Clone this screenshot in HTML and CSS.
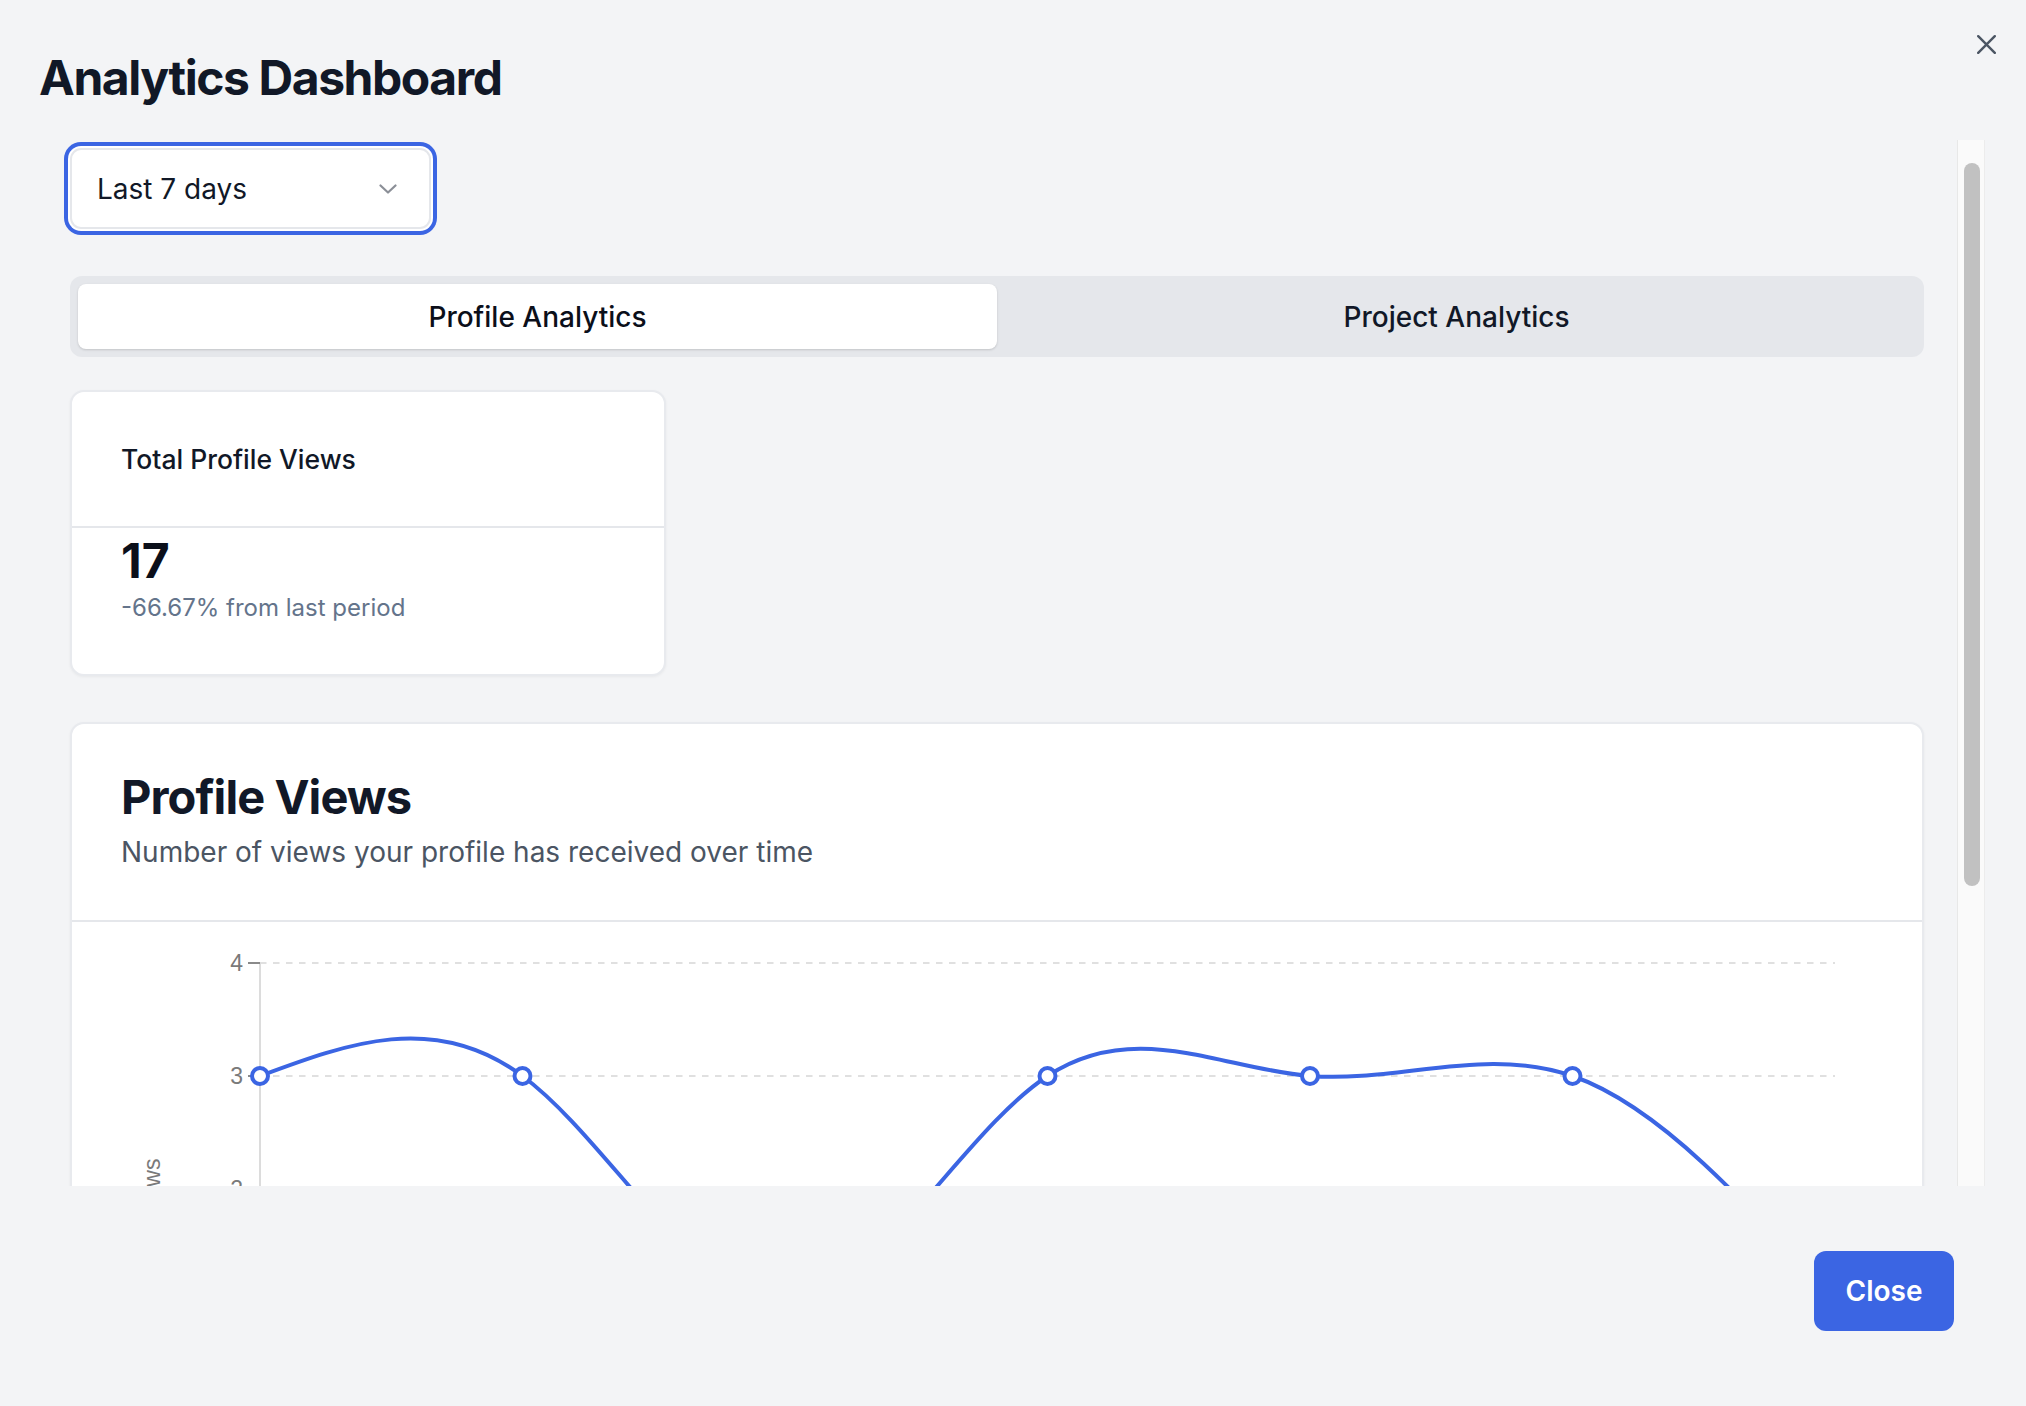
FILE: index.html
```html
<!DOCTYPE html>
<html lang="en">
<head>
    <meta charset="UTF-8">
    <meta name="viewport" content="width=device-width, initial-scale=1.0">
    <title>Analytics Dashboard</title>
    <link rel="stylesheet" href="styles.css">
</head>
<body>
    <div class="dialog">
        <!-- Header -->
        <header class="dialog-header">
            <h1>Analytics Dashboard</h1>
        </header>
        <button class="icon-close" aria-label="Close">
            <svg width="19" height="19" viewBox="0 0 19 19">
                <path d="M1.2 1.2 17.8 17.8M17.8 1.2 1.2 17.8" />
            </svg>
        </button>

        <!-- Scrollable body -->
        <div class="scroll-area">
            <div class="dialog-body">
                <div class="range-select">
                    <span>Last 7 days</span>
                    <svg width="18" height="10" viewBox="0 0 18 10">
                        <path d="M1.5 1.5 9 8.5l7.5-7" />
                    </svg>
                </div>

                <div class="tabs">
                    <button class="tab active">Profile Analytics</button>
                    <button class="tab">Project Analytics</button>
                </div>

                <div class="stats-grid">
                    <div class="card">
                        <div class="card-header">
                            <h3 class="stat-title">Total Profile Views</h3>
                        </div>
                        <div class="card-content">
                            <div class="stat-value">17</div>
                            <p class="stat-change">-66.67% from last period</p>
                        </div>
                    </div>
                </div>

                <div class="card chart-card">
                    <div class="card-header">
                        <h2 class="chart-title">Profile Views</h2>
                        <p class="chart-desc">Number of views your profile has received over time</p>
                    </div>
                    <div class="card-content chart-content">
                        <svg class="chart" width="1848" height="580" viewBox="0 0 1848 580">
                            <!-- grid -->
                            <g class="grid">
                                <line x1="188" y1="41" x2="1763" y2="41" />
                                <line x1="188" y1="154" x2="1763" y2="154" />
                                <line x1="188" y1="267" x2="1763" y2="267" />
                                <line x1="188" y1="380" x2="1763" y2="380" />
                            </g>
                            <!-- y axis -->
                            <g class="axis">
                                <line class="axis-line" x1="188" y1="41" x2="188" y2="493" />
                                <line class="axis-line" x1="188" y1="493" x2="1763" y2="493" />
                                <line class="tick" x1="176" y1="41" x2="188" y2="41" />
                                <line class="tick" x1="176" y1="154" x2="188" y2="154" />
                                <line class="tick" x1="176" y1="267" x2="188" y2="267" />
                                <line class="tick" x1="176" y1="380" x2="188" y2="380" />
                                <line class="tick" x1="176" y1="493" x2="188" y2="493" />
                                <text x="171" y="49" text-anchor="end">4</text>
                                <text x="171" y="162" text-anchor="end">3</text>
                                <text x="171" y="275" text-anchor="end">2</text>
                                <text x="171" y="388" text-anchor="end">1</text>
                                <text x="171" y="501" text-anchor="end">0</text>
                                <text x="88" y="267" text-anchor="middle" transform="rotate(-90 88 267)">Views</text>
                            </g>
                            <!-- x axis -->
                            <g class="axis">
                                <text x="188" y="530" text-anchor="middle">Jun 10</text>
                                <text x="450.5" y="530" text-anchor="middle">Jun 11</text>
                                <text x="713" y="530" text-anchor="middle">Jun 12</text>
                                <text x="975.5" y="530" text-anchor="middle">Jun 13</text>
                                <text x="1238" y="530" text-anchor="middle">Jun 14</text>
                                <text x="1500.5" y="530" text-anchor="middle">Jun 15</text>
                                <text x="1763" y="530" text-anchor="middle">Jun 16</text>
                            </g>
                            <!-- line -->
                            <path class="line" d="M188,154 C275.5,121.45 363,88.9 450.5,154 C538,219.1 625.5,381.84 713,380 C800.5,378.17 888,211.76 975.5,154 C1063,96.24 1150.5,147.14 1238,154 C1325.5,160.86 1413,123.67 1500.5,154 C1588,184.33 1675.5,282.16 1763,380" />
                            <g class="dots">
                                <circle cx="188" cy="154" r="8" />
                                <circle cx="450.5" cy="154" r="8" />
                                <circle cx="713" cy="380" r="8" />
                                <circle cx="975.5" cy="154" r="8" />
                                <circle cx="1238" cy="154" r="8" />
                                <circle cx="1500.5" cy="154" r="8" />
                                <circle cx="1763" cy="380" r="8" />
                            </g>
                        </svg>
                    </div>
                </div>
            </div>
            <div class="scrollbar">
                <div class="scrollbar-thumb"></div>
            </div>
        </div>

        <!-- Footer -->
        <footer class="dialog-footer">
            <button class="btn-primary">Close</button>
        </footer>
    </div>
</body>
</html>
```

FILE: styles.css
```css
:root {
    --bg: #f3f4f6;
    --text: #111827;
    --muted: #4b5563;
    --slate: #64748b;
    --border: #e5e7eb;
    --primary: #3b65e3;
    --font: "Inter", "Noto Sans", sans-serif;
}

* {
    margin: 0;
    padding: 0;
    box-sizing: border-box;
}

body {
    background-color: var(--bg);
    color: var(--text);
    font-family: var(--font);
    height: 100vh;
    overflow: hidden;
}

button {
    font-family: inherit;
    border: none;
    background: none;
    cursor: pointer;
}

.dialog {
    position: relative;
    height: 100vh;
    display: flex;
    flex-direction: column;
    padding: 0 41px 0 39px;
}

.dialog-header {
    padding-top: 48px;
    margin-bottom: 32px;
}

.dialog-header h1 {
    font-size: 48px;
    line-height: 60px;
    font-weight: 700;
    letter-spacing: -0.03em;
    color: var(--text);
}

.icon-close {
    position: absolute;
    top: 35px;
    right: 30px;
    width: 19px;
    height: 19px;
    display: flex;
}

.icon-close path {
    fill: none;
    stroke: #4b5563;
    stroke-width: 2.4;
    stroke-linecap: round;
}

/* Scroll area */
.scroll-area {
    height: 1046px;
    display: flex;
}

.dialog-body {
    flex: 1;
    min-width: 0;
    overflow: hidden;
    padding: 8px 33px 30px 31px;
}

.scrollbar {
    width: 28px;
    flex-shrink: 0;
    background: #fafafa;
    border-left: 1px solid #e8e8e8;
    border-right: 1px solid #ececec;
    padding: 23px 4px 0 6px;
}

.scrollbar-thumb {
    height: 723px;
    background: #c1c1c1;
    border-radius: 8px;
}

/* Select */
.range-select {
    width: 361px;
    height: 81px;
    display: flex;
    align-items: center;
    justify-content: space-between;
    padding: 0 32px 0 25px;
    background: #fff;
    border: 2px solid var(--border);
    border-radius: 11px;
    box-shadow: 0 0 0 2px #fff, 0 0 0 6px var(--primary);
    font-size: 28px;
    color: var(--text);
}

.range-select path {
    fill: none;
    stroke: #8b8f97;
    stroke-width: 2.2;
    stroke-linecap: round;
    stroke-linejoin: round;
}

/* Tabs */
.tabs {
    margin-top: 47px;
    display: grid;
    grid-template-columns: 1fr 1fr;
    padding: 8px;
    height: 81px;
    background: #e5e7eb;
    border-radius: 12px;
}

.tab {
    font-size: 28px;
    font-weight: 500;
    color: var(--text);
    border-radius: 8px;
}

.tab.active {
    background: #fff;
    color: #0b0f1a;
    box-shadow: 0 1px 3px rgba(0, 0, 0, 0.1), 0 1px 2px rgba(0, 0, 0, 0.06);
}

/* Cards */
.stats-grid {
    margin-top: 33px;
    display: grid;
    grid-template-columns: repeat(3, 1fr);
    gap: 33px;
}

.card {
    background: #fff;
    border: 2px solid #e8eaee;
    border-radius: 14px;
    box-shadow: 0 1px 3px rgba(0, 0, 0, 0.05);
}

.card-header {
    padding: 50px 49px 49px;
    border-bottom: 2px solid var(--border);
}

.card-content {
    padding: 4px 49px 48px;
}

.stat-title {
    font-size: 26.5px;
    line-height: 35px;
    font-weight: 500;
    color: var(--text);
}

.stat-value {
    font-size: 48px;
    line-height: 58px;
    font-weight: 700;
    color: #0b0f1a;
}

.stat-change {
    font-size: 24px;
    line-height: 36px;
    color: var(--slate);
}

.chart-card {
    margin-top: 46px;
}

.chart-card .card-header {
    padding: 45px 49px 48px;
}

.chart-title {
    font-size: 47px;
    line-height: 55px;
    font-weight: 700;
    letter-spacing: -0.02em;
    color: var(--text);
}

.chart-desc {
    margin-top: 9px;
    font-size: 28px;
    line-height: 39px;
    color: var(--muted);
}

.chart-content {
    padding: 0 0 48px;
}

.chart {
    display: block;
}

.chart text {
    font-family: "Liberation Sans", Arial, sans-serif;
    font-size: 23px;
    fill: #7a7a7a;
}

.grid line {
    stroke: #e0e0e0;
    stroke-width: 2;
    stroke-dasharray: 6.5 6.5;
}

.axis-line {
    stroke: #dcdcdc;
    stroke-width: 2;
}

.tick {
    stroke: #8a8a8a;
    stroke-width: 2;
}

.line {
    fill: none;
    stroke: var(--primary);
    stroke-width: 4;
}

.dots circle {
    fill: #fff;
    stroke: var(--primary);
    stroke-width: 4;
}

/* Footer */
.dialog-footer {
    margin-top: 65px;
    display: flex;
    justify-content: flex-end;
    padding-right: 31px;
}

.btn-primary {
    width: 140px;
    height: 80px;
    background: var(--primary);
    color: #fff;
    font-size: 28px;
    font-weight: 600;
    border-radius: 12px;
}
```
